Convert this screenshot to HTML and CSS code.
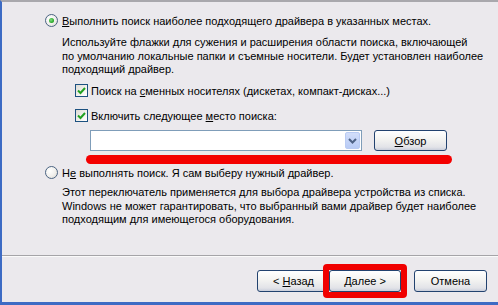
FILE: index.html
```html
<!DOCTYPE html>
<html lang="ru">
<head>
    <meta charset="UTF-8">
    <title>Мастер обновления оборудования</title>
    <link rel="stylesheet" href="styles.css">
</head>
<body>
    <div class="okno">
        <div class="soderzhimoe">
            <div class="stroka-radio">
                <span class="radio vybrano"></span>
                <span><u>В</u>ыполнить поиск наиболее подходящего драйвера в указанных местах.</span>
            </div>
            <p class="podskazka">
                Используйте флажки для сужения и расширения области поиска, включающей<br>
                по умолчанию локальные папки и съемные носители. Будет установлен наиболее<br>
                подходящий драйвер.
            </p>

            <div class="stroka-flag pervyi">
                <span class="flag">
                    <svg width="9" height="8" viewBox="0 0 9 8"><path d="M1 3.5 L3.5 6 L8 1" fill="none" stroke="#21a121" stroke-width="2"/></svg>
                </span>
                <span>Поиск на <u>с</u>менных носителях (дискетах, компакт-дисках...)</span>
            </div>
            <div class="stroka-flag">
                <span class="flag">
                    <svg width="9" height="8" viewBox="0 0 9 8"><path d="M1 3.5 L3.5 6 L8 1" fill="none" stroke="#21a121" stroke-width="2"/></svg>
                </span>
                <span>Включить следующее <u>м</u>есто поиска:</span>
            </div>

            <div class="stroka-put">
                <div class="kombo">
                    <span class="kombo-pole"></span>
                    <span class="kombo-knopka">
                        <svg width="9" height="6" viewBox="0 0 9 6"><path d="M1 1 L4.5 4.5 L8 1" fill="none" stroke="#4d6185" stroke-width="2"/></svg>
                    </span>
                </div>
                <button class="knopka obzor"><u>О</u>бзор</button>
            </div>
            <div class="krasnaya-liniya"></div>

            <div class="stroka-radio vtoroi">
                <span class="radio"></span>
                <span>Н<u>е</u> выполнять поиск. Я сам выберу нужный драйвер.</span>
            </div>
            <p class="podskazka vtoraya">
                Этот переключатель применяется для выбора драйвера устройства из списка.<br>
                Windows не может гарантировать, что выбранный вами драйвер будет наиболее<br>
                подходящим для имеющегося оборудования.
            </p>
        </div>

        <div class="niz">
            <button class="knopka">&lt; <u>Н</u>азад</button>
            <div class="ramka">
                <button class="knopka"><u>Д</u>алее &gt;</button>
            </div>
            <button class="knopka">Отмена</button>
        </div>
    </div>
</body>
</html>
```

FILE: styles.css
```css
body {
    margin: 0;
    background: #ebe9ed;
    font-family: "Liberation Sans", Arial, sans-serif;
    font-size: 11px;
    color: #000;
    overflow: hidden;
}

.okno {
    height: 305px;
    box-sizing: border-box;
    display: flex;
    flex-direction: column;
    border-left: 2px solid #3d6bc4;
    border-top: 2px solid #a9a8ad;
    border-bottom: 3px solid #3d6bc4;
    background: #ebe9ed;
}

.soderzhimoe {
    flex: 1;
    padding-left: 43px;
}

u {
    text-decoration: underline;
    text-underline-offset: 1px;
}

.stroka-radio {
    display: flex;
    align-items: center;
    gap: 4px;
    height: 13px;
    margin-top: 12px;
    white-space: nowrap;
}

.stroka-radio.vtoroi {
    margin-top: 2px;
}

.radio {
    width: 13px;
    height: 13px;
    box-sizing: border-box;
    border: 1px solid #4a6382;
    border-radius: 50%;
    background: radial-gradient(circle at 35% 35%, #ffffff 0%, #f2f1ee 50%, #d9d7d0 100%);
    display: flex;
    align-items: center;
    justify-content: center;
    flex-shrink: 0;
}

.radio.vybrano::after {
    content: "";
    width: 5px;
    height: 5px;
    border-radius: 50%;
    background: radial-gradient(circle at 40% 40%, #7fe07f 0%, #21a121 70%);
}

.podskazka {
    margin: 9px 0 0 17px;
    line-height: 13.5px;
    white-space: nowrap;
}

.podskazka.vtoraya {
    margin-top: 7px;
}

.stroka-flag {
    display: flex;
    align-items: center;
    gap: 3px;
    height: 13px;
    margin: 12px 0 0 30px;
    white-space: nowrap;
}

.stroka-flag.pervyi {
    margin-top: 7.5px;
}

.flag {
    width: 13px;
    height: 13px;
    box-sizing: border-box;
    border: 1px solid #1c5180;
    background: linear-gradient(135deg, #dcdbd5 0%, #f4f3ef 60%, #ffffff 100%);
    display: flex;
    align-items: center;
    justify-content: center;
    flex-shrink: 0;
}

.stroka-put {
    display: flex;
    align-items: center;
    gap: 12px;
    margin: 8px 0 0 45px;
}

.kombo {
    width: 272px;
    height: 21px;
    box-sizing: border-box;
    border: 1px solid #7f9db9;
    background: #fff;
    display: flex;
    padding: 1px;
}

.kombo-pole {
    flex: 1;
}

.kombo-knopka {
    width: 15px;
    box-sizing: border-box;
    border: 1px solid #b9cbf3;
    border-radius: 2px;
    background: linear-gradient(#d2defa, #b8cbf5);
    display: flex;
    align-items: center;
    justify-content: center;
}

.knopka {
    width: 73px;
    height: 22px;
    box-sizing: border-box;
    border: 1px solid #22426f;
    border-radius: 3px;
    background: linear-gradient(#ffffff 0%, #f3f3f1 45%, #e2e3e8 85%, #c9cedb 100%);
    font-family: "Liberation Sans", Arial, sans-serif;
    font-size: 11px;
    color: #000;
    padding: 0;
}

.obzor {
    height: 21px;
}

.krasnaya-liniya {
    width: 366px;
    height: 9px;
    margin: 4px 0 0 41px;
    background: #f40000;
    border-radius: 5px;
}

.niz {
    display: flex;
    align-items: center;
    justify-content: flex-end;
    padding: 8px 11px 4px 0;
    border-top: 1px solid #a5a4a8;
    box-shadow: inset 0 1px 0 #fafafa;
    height: 34px;
}

.ramka {
    border: 6px solid #f00000;
    border-radius: 4px;
    margin: 0 7px 0 -7px;
    display: flex;
}

.ramka .knopka {
    width: 72px;
}
```
